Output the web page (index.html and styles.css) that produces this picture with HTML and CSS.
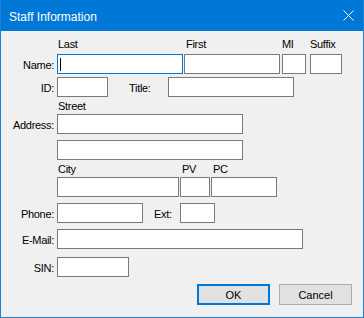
FILE: index.html
```html
<!DOCTYPE html>
<html>
<head>
    <title>Staff Information</title>
    <link rel="stylesheet" href="styles.css">
</head>
<body>
    <div class="window">
        <div class="titlebar">
            <span class="title">Staff Information</span>
            <svg class="close" width="11" height="11" viewBox="0 0 11 11">
                <path d="M0.5 0.5 L10.5 10.5 M10.5 0.5 L0.5 10.5" stroke="#fff" stroke-width="1" fill="none"/>
            </svg>
        </div>

        <div class="client">
            <!-- Name -->
            <div class="captions cap-top">
                <span class="cap c-last">Last</span>
                <span class="cap c-first">First</span>
                <span class="cap c-mi">MI</span>
                <span class="cap">Suffix</span>
            </div>
            <div class="row row-name">
                <label class="lbl">Name:</label>
                <span class="focus-wrap">
                    <input type="text" class="field focused w-last">
                    <span class="caret"></span>
                </span>
                <input type="text" class="field w-first gap-1">
                <input type="text" class="field w-mi gap-2">
                <input type="text" class="field w-suffix gap-4">
            </div>

            <!-- ID / Title -->
            <div class="row row-id">
                <label class="lbl">ID:</label>
                <input type="text" class="field w-id">
                <label class="inline-lbl lbl-title">Title:</label>
                <input type="text" class="field w-title">
            </div>

            <!-- Address -->
            <div class="captions cap-street">
                <span class="cap">Street</span>
            </div>
            <div class="row row-street">
                <label class="lbl">Address:</label>
                <input type="text" class="field w-street">
            </div>
            <div class="row row-street2">
                <span class="lbl"></span>
                <input type="text" class="field w-street">
            </div>
            <div class="captions cap-city">
                <span class="cap c-city">City</span>
                <span class="cap c-pv">PV</span>
                <span class="cap">PC</span>
            </div>
            <div class="row row-city">
                <span class="lbl"></span>
                <input type="text" class="field w-city">
                <input type="text" class="field w-pv gap-1">
                <input type="text" class="field w-pc gap-1">
            </div>

            <!-- Phone -->
            <div class="row row-phone">
                <label class="lbl">Phone:</label>
                <input type="text" class="field w-phone">
                <label class="inline-lbl lbl-ext">Ext:</label>
                <input type="text" class="field w-ext">
            </div>

            <div class="row row-email">
                <label class="lbl">E-Mail:</label>
                <input type="text" class="field w-email">
            </div>

            <div class="row row-sin">
                <label class="lbl">SIN:</label>
                <input type="text" class="field w-sin">
            </div>

            <div class="buttons">
                <button type="button" class="btn default">OK</button>
                <button type="button" class="btn">Cancel</button>
            </div>
        </div>
    </div>
</body>
</html>
```

FILE: styles.css
```css
body {
    margin: 0;
    background-color: #f0f0f0;
    font-family: "Liberation Sans", Arial, sans-serif;
}

/* Window frame */
.window {
    width: 364px;
    height: 318px;
    box-sizing: border-box;
    border: 1px solid #1883d7;
    border-top: none;
    display: flex;
    flex-direction: column;
}

/* Blue title bar */
.titlebar {
    height: 31px;
    background-color: #0078d7;
    display: flex;
    justify-content: space-between;
    align-items: flex-start;
    padding: 0 9px 0 8px;
    flex-shrink: 0;
}

.title {
    color: white;
    font-size: 12px;
    line-height: 14px;
    margin-top: 10px;
}

.close {
    margin-top: 10px;
}

/* Dialog body */
.client {
    flex: 1;
    background-color: #f0f0f0;
    font-size: 11px;
    letter-spacing: -0.3px;
    color: #000;
}

/* Rows of label + fields */
.row {
    display: flex;
    align-items: center;
    height: 20px;
}

.lbl {
    width: 56px;
    flex-shrink: 0;
    box-sizing: border-box;
    padding-right: 3px;
    text-align: right;
    line-height: 13px;
    padding-top: 2px;
}

.inline-lbl {
    line-height: 13px;
    padding-top: 2px;
}

/* Small captions above fields */
.captions {
    display: flex;
    height: 13px;
    line-height: 13px;
    padding-left: 57px;
}

.cap-top { margin-top: 7px; }
.cap-street { margin-top: 3px; }
.cap-city { margin-top: 3px; }

.c-last { width: 128px; }
.c-first { width: 96px; }
.c-mi { width: 28px; }
.c-city { width: 124px; }
.c-pv { width: 31px; }

.row-name { margin-top: 3px; }
.row-id { margin-top: 3px; }
.row-street { margin-top: 1px; }
.row-street2 { margin-top: 6px; }
.row-city { margin-top: 1px; }
.row-phone { margin-top: 6px; }
.row-email { margin-top: 6px; }
.row-sin { margin-top: 8px; }

/* Text boxes */
.field {
    height: 20px;
    box-sizing: border-box;
    border: 1px solid #7a7a7a;
    background-color: white;
    margin: 0;
    padding: 0 2px;
    font-family: inherit;
    font-size: 11px;
    outline: none;
    flex-shrink: 0;
}

.field.focused {
    border-color: #0078d7;
}

.focus-wrap {
    position: relative;
    display: flex;
}

/* Text cursor in the focused box */
.caret {
    position: absolute;
    left: 3px;
    top: 4px;
    width: 1px;
    height: 13px;
    background-color: black;
}

.gap-1 { margin-left: 1px; }
.gap-2 { margin-left: 2px; }
.gap-4 { margin-left: 4px; }

.w-last { width: 126px; }
.w-first { width: 96px; }
.w-mi { width: 24px; }
.w-suffix { width: 32px; }
.w-id { width: 51px; }
.w-title { width: 126px; }
.w-street { width: 186px; }
.w-city { width: 122px; }
.w-pv { width: 30px; }
.w-pc { width: 66px; }
.w-phone { width: 86px; }
.w-ext { width: 35px; }
.w-email { width: 246px; }
.w-sin { width: 72px; }

.lbl-title {
    margin-left: 21px;
    width: 39px;
}

.lbl-ext {
    margin-left: 11px;
    width: 26px;
}

/* OK / Cancel */
.buttons {
    display: flex;
    justify-content: flex-end;
    gap: 9px;
    margin-top: 7px;
    padding-right: 11px;
}

.btn {
    width: 73px;
    height: 21px;
    box-sizing: border-box;
    background-color: #e1e1e1;
    border: 1px solid #adadad;
    font-family: inherit;
    font-size: 11px;
    color: #000;
    padding: 0;
    margin: 0;
}

.btn.default {
    border: 2px solid #0078d7;
}
```
